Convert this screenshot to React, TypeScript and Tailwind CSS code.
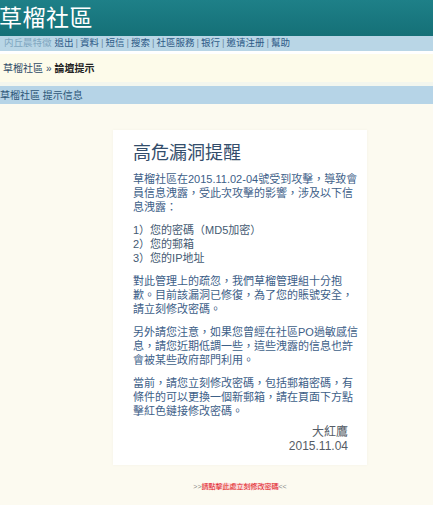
import React from 'react';

const font = { fontFamily: '"Liberation Sans", "Noto Sans CJK TC", sans-serif' };

const navLinks = ['資料', '短信', '搜索', '社區服務', '银行', '邀请注册', '幫助'];

export default function App() {
  return (
    <div className="min-h-[505px] w-[433px] overflow-hidden bg-[#fcfaf0]" style={font}>
      {/* header */}
      <div className="h-[36px] bg-gradient-to-b from-[#1e8088] to-[#157077] flex items-center">
        <h1 className="text-[23px] leading-none text-white font-normal tracking-[0.5px] -ml-[1px]">草榴社區</h1>
      </div>
      <div className="h-[15px] bg-[#b9d6e6] flex items-center px-[4px] text-[9.5px] text-[#2d5a86] whitespace-nowrap">
        <span className="text-[#7fa6c0]">内丘晨特徵</span>
        <span className="ml-[3px]">退出</span>
        {navLinks.map(l => (
          <span key={l}>
            <span className="text-[#6f8ea6] mx-[2px]">|</span>
            {l}
          </span>
        ))}
      </div>
      <div className="h-[3px] bg-white" />
      <div className="h-[28px] bg-[#fdfbea] flex items-center px-[3px] text-[10px] text-[#2f4a66]">
        草榴社區 <span className="mx-[3px]">»</span> <b className="text-[#222]">論壇提示</b>
      </div>
      <div className="h-[4px] bg-[#f3f6ee]" />
      <div className="h-[18px] bg-[#b6d4e7] flex items-center text-[10px] text-[#2d5678]">
        草榴社區 提示信息
      </div>

      {/* body */}
      <div className="ml-[113px] w-[254px] pt-[26px]">
        <div className="bg-white shadow-[0_0_3px_rgba(0,0,0,0.04)] pt-[11px] pb-[12px] pl-[20px] pr-[19px] text-[11px] leading-[14px] text-[#3d6088] whitespace-nowrap">
          <h2 className="text-[18px] leading-[24px] text-[#334d6b] font-normal mb-[7px]">高危漏洞提醒</h2>
          <p className="mb-[9px]">
            草榴社區在2015.11.02-04號受到攻擊，導致會<br />
            員信息洩露，受此次攻擊的影響，涉及以下信<br />
            息洩露：
          </p>
          <p className="mb-[9px] text-[#445a72]">
            1）您的密碼（MD5加密）<br />
            2）您的郵箱<br />
            3）您的IP地址
          </p>
          <p className="mb-[9px]">
            對此管理上的疏忽，我們草榴管理組十分抱<br />
            歉。目前該漏洞已修復，為了您的賬號安全，<br />
            請立刻修改密碼。
          </p>
          <p className="mb-[9px]">
            另外請您注意，如果您曾經在社區PO過敏感信<br />
            息，請您近期低調一些，這些洩露的信息也許<br />
            會被某些政府部門利用。
          </p>
          <p className="mb-[7px]">
            當前，請您立刻修改密碼，包括郵箱密碼，有<br />
            條件的可以更換一個新郵箱，請在頁面下方點<br />
            擊紅色鏈接修改密碼。
          </p>
          <p className="text-right text-[#555c66] text-[12px]">
            大紅鷹<br />
            2015.11.04
          </p>
        </div>
        <div className="mt-[17px] flex justify-center text-[7px] leading-[10px]">
          <a href="#" className="text-[#8a8a8a] no-underline">
            &gt;&gt;<span className="text-[#e0201c] bg-[#fbdada]">請點擊此處立刻修改密碼</span>&lt;&lt;
          </a>
        </div>
      </div>
    </div>
  );
}
